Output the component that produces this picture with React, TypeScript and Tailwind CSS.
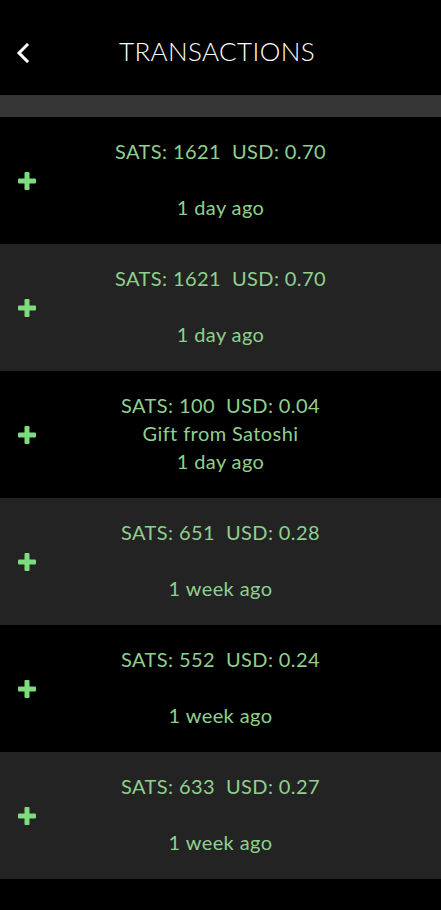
const txs = [
  { sats: 1621, usd: '0.70', memo: '', when: '1 day ago' },
  { sats: 1621, usd: '0.70', memo: '', when: '1 day ago' },
  { sats: 100, usd: '0.04', memo: 'Gift from Satoshi', when: '1 day ago' },
  { sats: 651, usd: '0.28', memo: '', when: '1 week ago' },
  { sats: 552, usd: '0.24', memo: '', when: '1 week ago' },
  { sats: 633, usd: '0.27', memo: '', when: '1 week ago' },
];

function Plus() {
  return (
    <svg width="18" height="18" viewBox="0 0 18 18">
      <rect x="6.5" y="0" width="5" height="18" rx="1" fill="#7ddc7d" />
      <rect x="0" y="6.5" width="18" height="5" rx="1" fill="#7ddc7d" />
    </svg>
  );
}

export default function App() {
  return (
    <div className="w-[441px] h-[910px] bg-black overflow-hidden" style={{ fontFamily: 'Lato, "Open Sans", sans-serif' }}>
      <div className="h-[95px] relative flex items-center justify-center pt-[8px]">
        <svg className="absolute left-[15px] top-[43px]" width="16" height="20" viewBox="0 0 16 20">
          <path d="M12 2 L4 10 L12 18" stroke="white" strokeWidth="3" fill="none" strokeLinecap="square" />
        </svg>
        <h1 className="text-white text-[26px] font-light tracking-[0.4px] pr-[7px]">TRANSACTIONS</h1>
      </div>
      <div className="h-[22px] bg-[#363636]" />
      {txs.map((t, i) => (
        <div key={i} className={`h-[127px] flex items-center ${i % 2 ? 'bg-[#232323]' : 'bg-black'}`}>
          <div className="w-[54px] flex justify-center">
            <Plus />
          </div>
          <div className="flex-1 flex flex-col items-center text-[#8fd08f] text-[20px] leading-[28px] tracking-[0.4px] pr-[54px] pb-[4px]">
            <div className="whitespace-pre">{`SATS: ${t.sats}  USD: ${t.usd}`}</div>
            <div className="h-[28px]">{t.memo}</div>
            <div>{t.when}</div>
          </div>
        </div>
      ))}
    </div>
  );
}
